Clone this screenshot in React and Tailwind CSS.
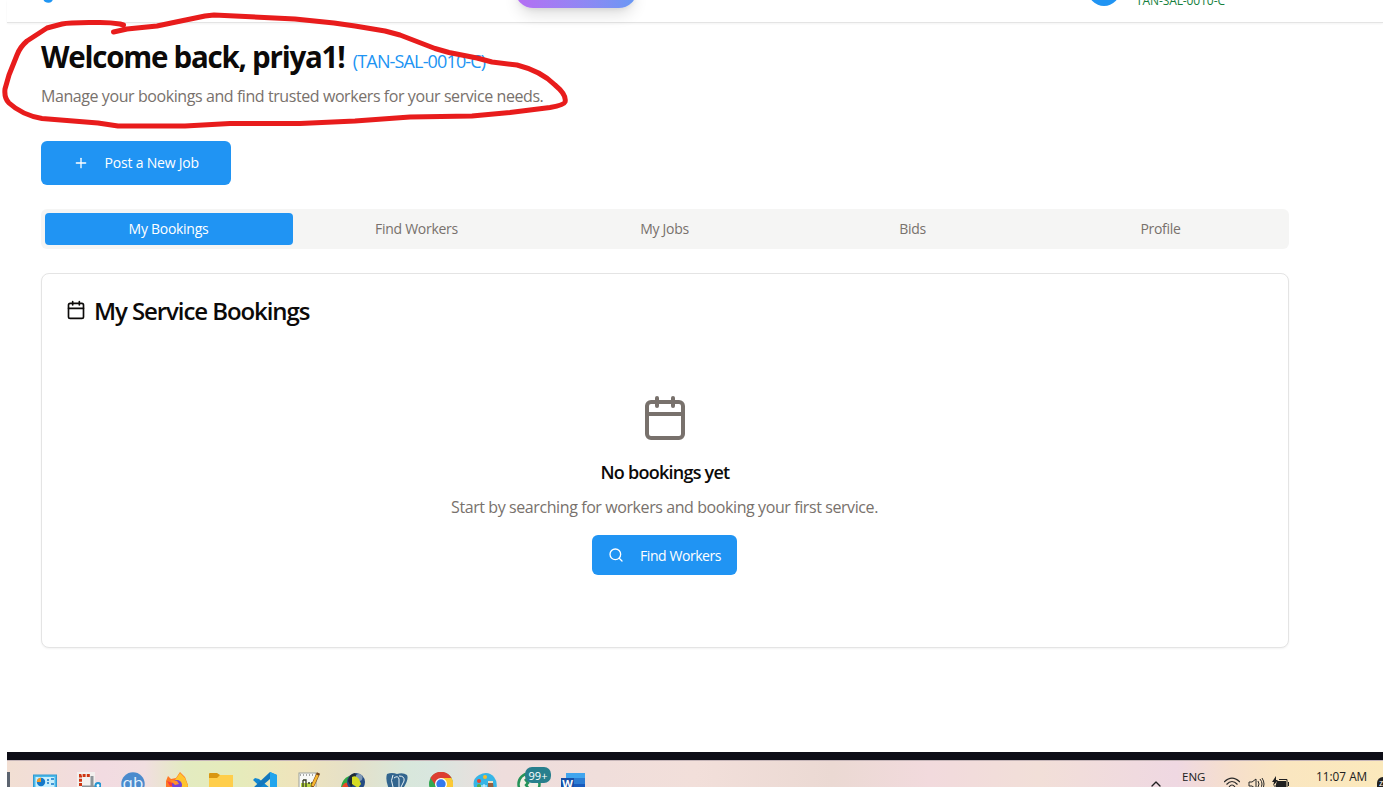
import React from "react";
import { Calendar, Plus, Search, ChevronUp } from "lucide-react";

const TABS = ["My Bookings", "Find Workers", "My Jobs", "Bids", "Profile"];

function Icon({ children, className = "" }) {
  return (
    <svg viewBox="0 0 24 24" className={`block size-6 shrink-0 ${className}`}>
      {children}
    </svg>
  );
}

function TopBar() {
  return (
    <header className="flex h-[23px] items-start border-b border-[#e4e4e4] bg-white shadow-[0_1px_2px_rgba(0,0,0,0.05)]">
      <svg viewBox="0 0 12 4" className="ml-[35px] h-1 w-3">
        <path d="M2.500 -2 Q3 1.200 6.300 1.200 T9.500 -2" fill="none" stroke="#2196f3" strokeWidth="3" />
      </svg>
      <div className="-mt-7 ml-[461px] h-9 w-[122px] rounded-full bg-linear-to-r from-[#b56df3] to-[#6698f4] shadow-[0_10px_15px_-3px_rgba(0,0,0,0.12),0_4px_6px_-4px_rgba(0,0,0,0.12)]" />
      <div className="-mt-[26px] ml-[451px] size-8 rounded-full bg-[#2094f3]" />
      <span className="-mt-[7px] ml-4 text-xs leading-4 tracking-[-0.1px] text-[#15803d]">TAN-SAL-0010-C</span>
    </header>
  );
}

function Welcome() {
  return (
    <section className="relative">
      <h1 className="mt-[17px] h-9 whitespace-nowrap text-[29.5px] font-bold leading-[33px] tracking-[-1.24px] text-[#0c0a09]">
        Welcome back, priya1!{" "}
        <span className="ml-0.5 text-lg font-normal tracking-[-0.85px] text-[#2094f3]">(TAN-SAL-0010-C)</span>
      </h1>
      <p className="mt-2 h-6 whitespace-nowrap text-base leading-[25px] tracking-[-0.42px] text-[#78716c]">
        Manage your bookings and find trusted workers for your service needs.
      </p>
      <svg viewBox="0 0 570 130" className="pointer-events-none absolute -left-[41px] -top-[40px] z-10 h-[130px] w-[570px]">
        <path
          d="M123.500 25 L120 24 Q111 22.500 100 22.500 Q70 22 62 24 L47 28 L27 41 Q20 47 17 55 L9 75 L5 89 Q4 98 9 103 Q22 115 42 118.500 L98 123 L118 126 L185 126 L230 123.500 L300 123.500 L355 121 L410 117 L472 116 L510 112.500 L550 107.500 Q564 105 565 102 Q567 95 555 85 Q541 71 517 65 L492 62 L477 58 L449 52.500 L435 48.500 L400 35 L385 31 L355 26 L334 23 L295 19 L214 15 L205 16 L176 22 L157 26 L127 29 L113.500 32"
          fill="none"
          stroke="#e81c1c"
          strokeWidth="5"
          strokeLinejoin="round"
          strokeLinecap="round"
        />
      </svg>
    </section>
  );
}

function Bookings() {
  return (
    <section className="mt-6 h-[375px] rounded-lg border border-[#e4e4e4] bg-white p-6 shadow-[0_1px_2px_rgba(0,0,0,0.05)]">
      <h2 className="flex h-7 items-center gap-[7px] text-2xl font-semibold leading-7 tracking-[-1.08px] text-[#0c0a09]">
        <Calendar className="-mt-1 size-5" />
        <span className="-mt-[3px] whitespace-nowrap pl-px">My Service Bookings</span>
      </h2>
      <div className="flex flex-col items-center pt-[68px]">
        <Calendar className="size-12 text-[#78716c]" />
        <h3 className="mt-4 whitespace-nowrap text-lg font-semibold leading-[29px] tracking-[-0.75px] text-[#0c0a09]">No bookings yet</h3>
        <p className="mt-2 whitespace-nowrap pr-px text-base leading-[25px] tracking-[-0.41px] text-[#78716c]">
          Start by searching for workers and booking your first service.
        </p>
        <button className="mr-px mt-[15px] flex h-10 w-[145px] items-center rounded-md bg-[#2094f3] pl-4 text-sm text-white">
          <Search className="size-4" />
          <span className="ml-4 mt-px whitespace-nowrap tracking-[-0.43px]">Find Workers</span>
        </button>
      </div>
    </section>
  );
}

function Taskbar() {
  return (
    <footer className="h-[35px] shrink-0 overflow-hidden border-t-8 border-[#0d0d16]">
      <div className="flex h-[27px] items-start border-t border-[#c5b5b8] bg-[linear-gradient(90deg,#f2dfd3_0%,#f2dbe1_7%,#f1dee0_10%,#e3ebc0_13%,#e6ebbb_17%,#efe4bc_21%,#e5e0c8_25%,#d8e7db_29%,#d9e6df_31%,#eedddc_36%,#f2dfda_50%,#ebd9d3_60%,#f2dadd_67%,#f2dfd8_75%,#efd8e2_85%,#f6dfcc_89%,#fae6c0_93%,#fbe9bc_100%)]">
        <div className="mt-[11px] h-6 w-[3px] bg-[#5c6470]" />
        <div className="ml-[23px] mt-[11px] flex gap-5">
          <Icon>
            <rect x="0.500" y="3" width="23" height="18" fill="#48b8ea" stroke="#3299d0" />
            <rect x="2.500" y="5" width="19" height="14" fill="#c9effc" />
            <circle cx="8" cy="10" r="4.200" fill="#1679c9" />
            <path d="M8 10V5.800A4.200 4.200 0 0 0 3.800 10Z" fill="#f59b25" />
            <path d="M14 8h2M18 7h3M14 11h2M18 12h3" stroke="#1679c9" strokeWidth="1.500" />
          </Icon>
          <Icon>
            <rect x="0" y="0" width="18" height="18" fill="#f3f0ee" />
            <path d="M15 4v12M5 15h15" stroke="#8e9599" strokeWidth="3" />
            <path d="M3.500 14V3.500H14" fill="none" stroke="#cf3511" strokeWidth="3" strokeDasharray="3 1.200" />
            <circle cx="21" cy="13.500" r="2.500" fill="#fff" stroke="#2396d3" strokeWidth="2" />
          </Icon>
          <Icon>
            <circle cx="12" cy="12" r="11.700" fill="#4b8bcd" />
            <text x="12" y="17" textAnchor="middle" fontSize="17" fill="#e5f3ff" fontFamily="Open Sans, sans-serif">qb</text>
          </Icon>
          <Icon>
            <path d="M1 24V9L3 4l3 3 5-1 4-6 5 5 3 8v11Z" fill="#ff7624" />
            <path d="M15 1l5 5 3 8-4 6-5-9-4-3Z" fill="#ffc42e" />
            <path d="M2 9l5 2 4-1 2 4H5Z" fill="#f63b3d" />
            <circle cx="12" cy="13" r="5" fill="#7143d8" />
            <path d="M5 8l7 1 2 3-4 1Z" fill="#ff912b" />
          </Icon>
          <Icon>
            <path d="M0 2Q0 1 1 1h7l3 2h12q1 0 1 1v16H0Z" fill="#d99712" />
            <path d="M0 6h8l3-3h13v17H0Z" fill="#ffce4b" />
          </Icon>
          <Icon>
            <path d="M17 0l7 3v18l-7 3L0 8l2-2 4 1 11 9Z" fill="#1287d0" />
            <path d="M17 0v7L3 19l-3-3Z" fill="#1377bd" />
            <path d="M17 0l7 3v18l-7 3Z" fill="#22a5ed" />
          </Icon>
          <Icon>
            <rect x="2" y="1" width="17" height="22" fill="#f8f9f6" stroke="#9ca29b" />
            <path d="M4 11h13v10H4Z" fill="#bad843" />
            <path d="M6 8v8M6 8h3v8M11 11h2M14 11h2" fill="none" stroke="#353a25" strokeWidth="1.300" />
            <path d="M3 3h15" stroke="#555" strokeDasharray="1 2" />
            <path d="M21.500 1L15 15" stroke="#744418" strokeWidth="3.500" />
            <path d="M20.500 3l-5 11" stroke="#f7b731" strokeWidth="2.500" />
          </Icon>
          <Icon>
            <path d="M0 15Q1 7 8 4l6 8-2 12H4Z" fill="#2fa943" />
            <path d="M1 15q2-5 6-4l6 5-4 6H3Z" fill="#eb4827" />
            <circle cx="15" cy="10" r="9" fill="#244b83" />
            <path d="M7 9q1-7 7-8l2 4-4 8-2 2Z" fill="#202c36" />
            <circle cx="18" cy="5.500" r="3.500" fill="#8099b5" />
            <path d="M11 5q4-2 7 2l2 5-3 4-6-4Z" fill="#d4db24" />
          </Icon>
          <Icon>
            <path d="M2 2q5-2 10 0 6-2 10 1 2 4-3 12l-3 5-4 4-4-6-4-1Q0 8 2 2Z" fill="#32658e" />
            <path d="M8 3q-3 5 0 12M9 6q4-3 5 1v8M14 4q6 0 5 5l-3 6" fill="none" stroke="#e8f2f5" strokeWidth="1" />
          </Icon>
          <Icon>
            <circle cx="12" cy="12" r="12" fill="#33a852" />
            <path d="M1.500 6A12 12 0 0 1 22.500 6L12 8 7 14Z" fill="#dd3e31" />
            <path d="M22.500 6A12 12 0 0 1 12 24L17 12 12 6Z" fill="#fcc934" />
            <circle cx="12" cy="12" r="6" fill="#fff" />
            <circle cx="12" cy="12" r="4.700" fill="#3478ed" />
          </Icon>
          <Icon>
            <path d="M1 15Q-1 7 6 3q9-5 15 2 5 6 1 17H4Z" fill="#36b5e6" />
            <circle cx="6" cy="9" r="2" fill="#e8432f" />
            <circle cx="12" cy="5" r="2" fill="#f8ba2b" />
            <circle cx="6" cy="14" r="2" fill="#5aae43" />
            <path d="M15 9h5v2h-5z" fill="#f5dfbd" />
            <path d="M15 11h5l1 8h-6z" fill="#965f3e" />
            <path d="M11 12v5M8 14h6" stroke="#e3f8ff" />
          </Icon>
          <div className="relative">
            <Icon>
              <circle cx="12" cy="12" r="10.500" fill="#f3eee5" stroke="#259359" strokeWidth="2.500" />
              <path d="M8 7l3 4-2 2 3 4" fill="none" stroke="#259359" strokeWidth="2.500" />
            </Icon>
            <span className="absolute -top-[5px] left-2 flex h-4 w-[26px] items-center justify-center rounded-[7px] bg-[#287f8d] text-[11px] leading-none text-white">99+</span>
          </div>
          <Icon>
            <path d="M5 1h19v5H5Z" fill="#41a5ee" />
            <path d="M5 6h19v6H5Z" fill="#2b7cd3" />
            <path d="M5 12h19v11H5Z" fill="#185abd" />
            <rect y="6" width="13" height="13" fill="#174ea6" />
            <text x="6.500" y="16" textAnchor="middle" fontSize="11" fontWeight="700" fill="white" fontFamily="Open Sans, sans-serif">W</text>
          </Icon>
        </div>
        <div className="ml-auto flex h-full items-start leading-4 text-[#202020]">
          <ChevronUp className="mt-[15px] size-4" strokeWidth={2} />
          <span className="ml-[18px] mt-2 w-[26px] whitespace-nowrap text-[11.5px]">ENG</span>
          <svg viewBox="0 0 16 16" className="ml-4 mt-[15px] size-4" fill="none" stroke="#292929">
            <path d="M0 6q8-8 16 0M2.500 8.500q5.500-6 11 0M5 11q3-4 6 0" strokeWidth="1.200" />
          </svg>
          <svg viewBox="0 0 17 16" className="ml-2 mt-[15px] h-4 w-[17px]" fill="none" stroke="#292929">
            <path d="M1 6h3l4-3v10l-4-3H1ZM10 5q2 3 0 6M12 3q4 5 0 10M14 2q4 6 0 12" />
          </svg>
          <svg viewBox="0 0 17 16" className="ml-[7px] mt-[15px] h-4 w-[17px]">
            <path d="M5 5h9v8H4V8Z" fill="#202020" />
            <path d="M7 3.500h8v9H3V9M16.500 6v4" fill="none" stroke="#202020" />
            <path d="M4 0L0 6h2L1 10l5-6H4Z" fill="#202020" />
          </svg>
          <span className="ml-[27px] mt-[7px] w-[52px] whitespace-nowrap text-[11.8px]">11:07 AM</span>
          <span className="ml-[9px] mt-4 h-4 w-[6px] overflow-hidden rounded-l-md bg-[#202020] text-[9px] leading-3 text-white"><span className="ml-[2px]">z</span></span>
        </div>
      </div>
    </footer>
  );
}

export default function App() {
  return (
    <div className="h-[787px] w-[1383px] overflow-hidden bg-white pl-[7px] font-['Open_Sans','Noto_Sans',sans-serif]">
      <div className="flex h-full flex-col">
        <TopBar />
        <main className="ml-[34px] w-[1248px] flex-1">
          <Welcome />
          <button className="mt-[33px] flex h-11 w-[190px] items-center rounded-md bg-[#2094f3] pl-8 text-sm text-white">
            <Plus className="size-4" />
            <span className="ml-[15.500px] whitespace-nowrap tracking-[-0.2px]">Post a New Job</span>
          </button>
          <nav className="mt-6 grid h-10 grid-cols-5 rounded-md bg-[#f5f5f4] p-1">
            {TABS.map((tab, i) => (
              <button
                key={tab}
                className={`flex items-center justify-center rounded-sm pr-px text-sm tracking-[-0.28px] ${i === 0 ? "bg-[#2094f3] text-white" : "text-[#78716c]"}`}
              >
                {tab}
              </button>
            ))}
          </nav>
          <Bookings />
        </main>
        <Taskbar />
      </div>
    </div>
  );
}
